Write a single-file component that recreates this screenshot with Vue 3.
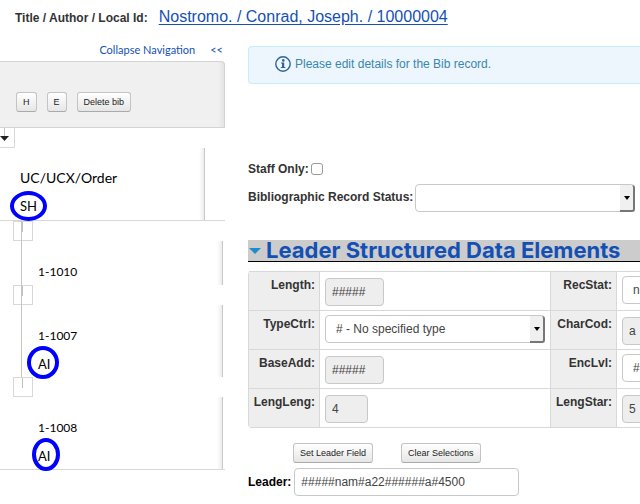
<script setup>
import { ref } from 'vue'

const nodes = [
  { label: 'UC/UCX/Order', tag: 'SH', kind: 'root', mark: 'wide' },
  { label: '1-1010', tag: '', kind: 'short', mark: '' },
  { label: '1-1007', tag: 'AI', kind: 'child', mark: 'round' },
  { label: '1-1008', tag: 'AI', kind: 'last', mark: 'tall' }
]

const rows = [
  [
    { name: 'Length', value: '#####', type: 'text', size: 'mid' },
    { name: 'RecStat', value: 'n - New', type: 'select' }
  ],
  [
    { name: 'TypeCtrl', value: '# - No specified type', type: 'select' },
    { name: 'CharCod', value: 'a', type: 'text', size: 'small' }
  ],
  [
    { name: 'BaseAdd', value: '#####', type: 'text', size: 'mid' },
    { name: 'EncLvl', value: '# - Full level', type: 'select' }
  ],
  [
    { name: 'LengLeng', value: '4', type: 'text', size: 'small' },
    { name: 'LengStar', value: '5', type: 'text', size: 'small' }
  ]
]

const leader = ref('#####nam#a22######a#4500')
</script>

<template>
  <div class="page">
    <header class="top">
      <span class="top-label">Title / Author / Local Id:</span>
      <a class="top-link" href="#">Nostromo. / Conrad, Joseph. / 10000004</a>
    </header>

    <div class="columns">
      <nav class="side">
        <div class="collapse">
          <a href="#">Collapse Navigation</a>
          <a href="#">&lt;&lt;</a>
        </div>
        <div class="panel">
          <button class="btn" type="button">H</button>
          <button class="btn" type="button">E</button>
          <button class="btn" type="button">Delete bib</button>
        </div>
        <div class="toggle first">
          <svg width="15" height="20" viewBox="0 0 15 20">
            <path d="M4.5 0V8" stroke="#c4c4c4" />
            <path d="M0 8H9L4.5 13Z" fill="#222" />
            <path d="M0 19.5H14.5V0" fill="none" stroke="#d8d8d8" />
          </svg>
        </div>
        <template v-for="(node, i) in nodes" :key="node.label">
          <div v-if="i > 0" class="toggle">
            <svg width="20" height="20" viewBox="0 0 20 20">
              <rect x="0.5" y="0.5" width="19" height="19" fill="none" stroke="#d8d8d8" />
              <path v-if="i < 3" d="M8.5 0V20" stroke="#c4c4c4" />
              <path d="M9.5 1V11" stroke="#c0c0bc" />
            </svg>
          </div>
          <div class="node" :class="node.kind">
            <div class="card">
              <div class="node-label">{{ node.label }}</div>
              <div v-if="node.tag" class="tag">
                {{ node.tag }}
                <span class="mark" :class="node.mark"></span>
              </div>
            </div>
          </div>
        </template>
      </nav>

      <main class="main">
        <div class="alert">
          <svg width="16" height="16" viewBox="0 0 16 16">
            <circle cx="8" cy="8" r="7.2" fill="none" stroke="#2f6496" stroke-width="1.4" />
            <circle cx="8.3" cy="4.4" r="1.3" fill="#2f6496" />
            <path d="M6 6.6H9.2V11H10.3V12H5.8V11H7V7.6H6Z" fill="#2f6496" />
          </svg>
          <span>Please edit details for the Bib record.</span>
        </div>

        <div class="staff">
          <label for="staff">Staff Only:</label>
          <input id="staff" type="checkbox" />
        </div>

        <div class="status">
          <label for="status">Bibliographic Record Status:</label>
          <div class="pick">
            <select id="status"><option></option></select>
            <span class="drop"></span>
          </div>
        </div>

        <h2 class="heading"><span class="caret"></span>Leader Structured Data Elements</h2>

        <table class="grid">
          <tbody>
            <tr v-for="(row, r) in rows" :key="r">
              <template v-for="cell in row" :key="cell.name">
                <th scope="row"><label :for="cell.name">{{ cell.name }}:</label></th>
                <td :class="{ raised: cell.type === 'select' }">
                  <div v-if="cell.type === 'select'" class="pick">
                    <select :id="cell.name"><option>{{ cell.value }}</option></select>
                    <span class="drop"></span>
                  </div>
                  <input v-else :id="cell.name" class="field locked" :class="cell.size" type="text" :value="cell.value" readonly />
                </td>
              </template>
            </tr>
          </tbody>
        </table>

        <div class="actions">
          <button class="btn" type="button">Set Leader Field</button>
          <button class="btn" type="button">Clear Selections</button>
        </div>

        <div class="leader">
          <label for="leader">Leader:</label>
          <input id="leader" v-model="leader" class="field" type="text" />
        </div>
      </main>
    </div>
  </div>
</template>

<style>
html,
body {
  background: #fff;
  overflow: hidden;
}
</style>

<style scoped>
* {
  box-sizing: border-box;
}
.page {
  font: 12px/16px "Liberation Sans", Arial, sans-serif;
  color: #333;
  overflow: hidden;
}
.top {
  display: flex;
  align-items: baseline;
  gap: 11px;
  height: 38px;
  padding: 7px 0 0 15px;
  white-space: nowrap;
}
.top-label {
  font-weight: bold;
}
.top-link {
  font-size: 16px;
  line-height: 20px;
  color: #1450b4;
  text-underline-offset: 2px;
}
.columns {
  display: flex;
  gap: 23px;
}
.side {
  flex: 0 0 225px;
  font-family: Lato, sans-serif;
  color: #000;
}
.collapse {
  display: flex;
  justify-content: flex-end;
  gap: 15px;
  height: 23px;
  padding: 4px 2px 0 0;
  font-size: 11px;
}
.collapse a {
  color: #1450b4;
  text-decoration: none;
}
.panel {
  display: flex;
  gap: 10px;
  height: 67px;
  padding: 30px 0 0 16px;
  background: linear-gradient(to left, #e4e4e4, #f0f0f0 6px);
  border: solid #d4d4d4;
  border-width: 1px 1px 1px 0;
  border-radius: 0 4px 0 0;
}
.btn {
  height: 20px;
  padding: 0 6px;
  font: 9px/16px "Liberation Sans", Arial, sans-serif;
  color: #222;
  background: linear-gradient(#fff, #e6e6e6);
  border: 1px solid #c4c4c4;
  border-bottom-color: #aaa;
  border-radius: 3px;
}
.toggle {
  height: 20px;
  margin-left: 13px;
}
.toggle.first {
  margin-left: 0;
}
.toggle svg {
  display: block;
}
.node {
  height: 72px;
}
.card {
  height: 100%;
  padding: 23px 0 0 16px;
  background: linear-gradient(to left, #ececec, #fff 5px);
  border-right: 1px solid #c8c8c8;
}
.node.root {
  height: 73px;
  padding-right: 20px;
  border-bottom: 1px solid #d8d8d8;
}
.root .card {
  padding: 22px 0 0 20px;
}
.node.short {
  height: 44px;
}
.node.short,
.node.child {
  margin-left: 21px;
  padding-right: 2px;
}
.short .card,
.child .card {
  border-left: 1px solid #c4c4c4;
}
.node.last {
  height: 73px;
  padding-right: 2px;
  border-bottom: 1px solid #d8d8d8;
}
.last .card {
  padding-left: 38px;
}
.node-label {
  font-size: 12px;
  line-height: 16px;
}
.root .node-label {
  font-size: 14px;
}
.tag {
  position: relative;
  width: 16px;
  margin-top: 12px;
  font-size: 13px;
  line-height: 16px;
}
.mark {
  position: absolute;
  border: 4px solid #00f;
  border-radius: 50%;
}
.mark.wide {
  left: -10px;
  top: -7px;
  width: 37px;
  height: 30px;
}
.mark.round {
  left: -11px;
  top: -10px;
  width: 32px;
  height: 33px;
}
.mark.tall {
  left: -6px;
  top: -10px;
  width: 28px;
  height: 33px;
}
.main {
  flex: 1;
  min-width: 0;
  padding-top: 8px;
  overflow: hidden;
  white-space: nowrap;
}
.alert {
  display: flex;
  align-items: center;
  gap: 4px;
  height: 38px;
  padding: 0 0 3px 26px;
  color: #3a87ad;
  background: #edf5fd;
  border: solid #c4eefa;
  border-width: 1px 0 1px 1px;
  border-radius: 4px 0 0 4px;
}
.staff,
.status,
.leader {
  display: flex;
  align-items: center;
  gap: 2px;
  font-weight: bold;
}
.staff {
  margin-top: 77px;
}
.staff input {
  appearance: none;
  width: 12px;
  height: 12px;
  margin: 0;
  background: #fff;
  border: 1px solid #999;
  border-radius: 3px;
}
.status {
  margin-top: 7px;
}
.status label {
  padding-bottom: 2px;
}
.pick {
  position: relative;
  flex: none;
  width: 220px;
  height: 28px;
}
.pick select {
  appearance: none;
  display: block;
  width: 100%;
  height: 100%;
  padding: 0 24px 0 10px;
  font: 12px/16px "Liberation Sans", Arial, sans-serif;
  color: #444;
  background: #fff;
  border: 1px solid #c8c8c8;
  border-radius: 4px;
}
.drop {
  position: absolute;
  top: 1px;
  right: 0;
  width: 15px;
  height: 27px;
  background: #f0f0f0;
  border: solid #777;
  border-width: 0 2px 2px 0;
  border-radius: 0 3px 3px 0;
  pointer-events: none;
}
.drop::after {
  content: "";
  position: absolute;
  top: 11px;
  left: 4px;
  border: solid transparent;
  border-width: 4px 3px 0;
  border-top-color: #000;
}
.heading {
  display: flex;
  align-items: center;
  gap: 5px;
  height: 22px;
  margin: 28px 0 9px;
  padding-left: 1px;
  font: bold 22px/21px Inter, sans-serif;
  color: #1450b4;
  background: #ccc;
  border-bottom: 1px solid #000;
}
.caret {
  border: solid transparent;
  border-width: 6px 6px 0;
  border-top-color: #1c8ccc;
}
.grid {
  table-layout: fixed;
  width: 560px;
  border-collapse: separate;
  border-spacing: 0;
  border: solid #d8d8d8;
  border-width: 0 0 1px 1px;
  border-radius: 4px;
}
.grid th,
.grid td {
  height: 39px;
  padding: 5px;
  vertical-align: top;
  border-top: 1px solid #d8d8d8;
}
.grid th {
  width: 70px;
  padding: 5px 4px;
  text-align: right;
  background: #eee;
}
.grid th:nth-of-type(2) {
  width: 66px;
}
.grid td {
  width: 231px;
  padding: 6px 5px 4px;
  border-left: 1px solid #d8d8d8;
}
.grid td.raised {
  padding: 4px 5px;
}
.grid th + td + th {
  padding-left: 2px;
  border-left: 1px solid #d8d8d8;
}
.field {
  display: block;
  height: 28px;
  padding: 0 6px;
  font: 12px/16px "Liberation Sans", Arial, sans-serif;
  color: #444;
  background: #fff;
  border: 1px solid #c8c8c8;
  border-radius: 4px;
}
.locked {
  background: #eee;
}
.field.mid {
  width: 59px;
}
.field.small {
  width: 43px;
}
.actions {
  display: flex;
  gap: 28px;
  margin: 15px 0 5px 45px;
}
.leader {
  gap: 3px;
  color: #000;
}
.leader .field {
  width: 225px;
}
</style>
